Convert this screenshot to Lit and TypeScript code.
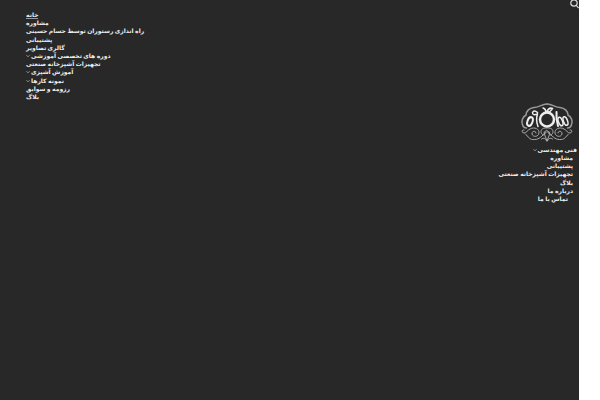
import { LitElement, html, css, svg, nothing } from "lit";
import { customElement } from "lit/decorators.js";

interface Item { text: string; menu?: boolean; current?: boolean; inset?: string; }

const primary: Item[] = [
  { text: "خانه", current: true },
  { text: "مشاوره" },
  { text: "راه اندازی رستوران توسط حسام حسینی" },
  { text: "پشتیبانی" },
  { text: "گالری تصاویر" },
  { text: "دوره های تخصصی آموزشی", menu: true },
  { text: "تجهیزات آشپزخانه صنعتی" },
  { text: "آموزش آشپزی", menu: true },
  { text: "نمونه کارها", menu: true },
  { text: "رزومه و سوابق" },
  { text: "بلاگ" },
];

const secondary: Item[] = [
  { text: "فنی مهندسی", menu: true, inset: "flush" },
  { text: "مشاوره" },
  { text: "پشتیبانی" },
  { text: "تجهیزات آشپزخانه صنعتی" },
  { text: "بلاگ" },
  { text: "درباره ما" },
  { text: "تماس با ما", inset: "deep" },
];

const chevron = html`<svg class="chevron" viewBox="0 0 8 8" aria-hidden="true"><path d="M1 2.5 4 5.5 7 2.5"/></svg>`;

const half = svg`
  <path d="M53 4C42 4 37 11 27 11 17 12 11 19 11 26 4 30 1 38 4 45 5 50 8 52 12 52" stroke-width="3" stroke="#999"/>
  <path d="M7 56C2 54 2 62 7 62 12 62 14 56 19 54 28 49 38 54 37 62 36 70 25 71 23 64 22 58 31 56 31 62" stroke-width="2"/>
  <path d="M10 64C16 70 18 76 28 75 38 75 42 68 52 60" stroke-width="2"/>
  <path d="M52 52C43 51 39 57 42 63 46 69 51 64 48 60" stroke-width="2"/>
  <path d="M42 74C47 70 51 74 52 78" stroke-width="2"/>`;

@customElement("app-root")
export class AppRoot extends LitElement {
  static styles = css`
    :host { display: block; min-height: 100vh; background: #fff; }
    .page {
      box-sizing: border-box; min-height: 100vh; margin-right: 21px;
      background: #282828; color: #eee;
      font: bold 6px/8px Lato, "DejaVu Sans", sans-serif;
      display: grid; grid-template-columns: 1fr auto; align-items: start;
    }
    ul { list-style: none; margin: 0; padding: 0; display: flex; flex-direction: column; justify-content: space-between; }
    .primary ul { padding: 11px 0 0 26px; align-items: flex-start; min-height: 90px; }
    .secondary ul { min-height: 57px; align-items: flex-end; }
    .secondary li { padding-right: 6px; }
    .secondary li.flush { padding-right: 2px; }
    .secondary li.deep { padding-right: 11px; }
    li { height: 8px; }
    a { color: inherit; text-decoration: none; display: flex; align-items: center; gap: 1px; white-space: nowrap; }
    a.current { box-shadow: 0 1px #999; height: 7px; }
    .chevron { width: 4px; height: 4px; fill: none; stroke: #ccc; stroke-width: 1.4; }
    .side { display: flex; flex-direction: column; align-items: flex-end; }
    .search { border: 0; padding: 0; background: none; width: 9px; height: 9px; display: block; }
    .search svg { display: block; width: 9px; height: 9px; fill: none; stroke: #ddd; stroke-width: 1.2; }
    .logo { margin: 93px 5px 3px 0; }
    .logo svg { width: 54px; height: 41px; fill: none; stroke: #aaa; stroke-linecap: round; }
  `;

  private list(items: Item[]) {
    return html`<ul>${items.map((i) => html`<li class=${i.inset ?? ""}>
      <a href="#" class=${i.current ? "current" : ""} dir="rtl"><span>${i.text}</span>${i.menu ? chevron : nothing}</a></li>`)}</ul>`;
  }

  render() {
    return html`
      <div class="page">
        <nav class="primary">${this.list(primary)}</nav>
        <div class="side">
          <button class="search" aria-label="جستجو">
            <svg viewBox="0 0 9 9"><circle cx="4" cy="3" r="3.2"/><path d="M6.2 5.4 8.7 8"/></svg>
          </button>
          <a class="logo" href="#" aria-label="خانه">
            <svg viewBox="0 0 106 82">
              ${half}<g transform="translate(106 0) scale(-1 1)">${half}</g>
              <path d="M47 62 53 78 59 62 53 57Z" stroke-width="2"/>
              <g stroke="#eee" stroke-width="4">
                <circle cx="53" cy="35" r="14" stroke-width="5"/>
                <path d="M51 20Q50 13 45 12M53 19Q57 10 64 13 60 20 54 20" stroke-width="3"/>
                <ellipse cx="19" cy="39" rx="5" ry="9" transform="rotate(20 19 39)"/>
                <path d="M35 49Q30 36 34 24M34 24Q24 28 24 21 27 15 34 21" stroke-width="3"/>
                <path d="M72 20Q71 34 75 48"/>
                <ellipse cx="80" cy="39" rx="4" ry="9" transform="rotate(-20 80 39)" stroke-width="3"/>
                <ellipse cx="90" cy="38" rx="4" ry="9" transform="rotate(-20 90 38)" stroke-width="3"/>
              </g>
            </svg>
          </a>
          <nav class="secondary">${this.list(secondary)}</nav>
        </div>
      </div>`;
  }
}
